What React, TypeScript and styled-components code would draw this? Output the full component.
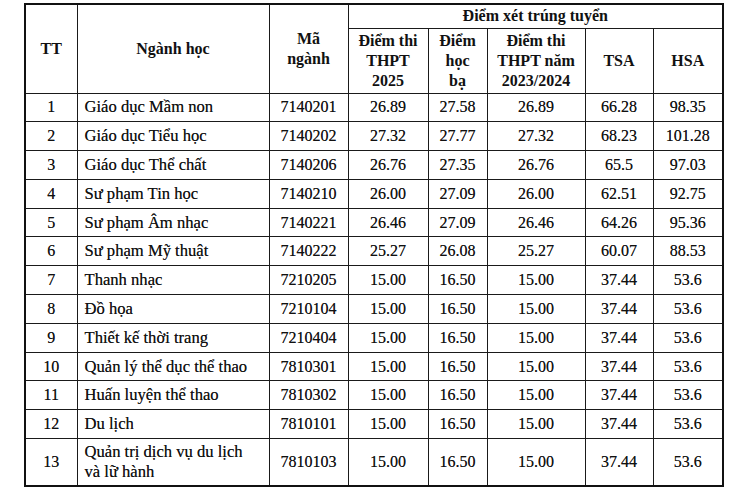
import React from 'react'
import styled, { createGlobalStyle } from 'styled-components'

const GlobalStyle = createGlobalStyle`
  html, body {
    margin: 0;
    padding: 0;
    background: #ffffff;
  }
  body {
    font-family: "Liberation Serif", "DejaVu Serif", serif;
    color: #111;
  }
`;

const Page = styled.div`
  width: 751px;
  height: 497px;
  padding: 3px 0 0 24px;
  box-sizing: border-box;
  overflow: hidden;
`;

const Table = styled.table`
  border-collapse: collapse;
  table-layout: fixed;
  width: 698px;
  border: 2px solid #111;
  font-family: "Liberation Serif", "DejaVu Serif", serif;
  font-size: 16px;
  color: #111;
`;

const HeadCell = styled.th`
  border: 1px solid #1a1a1a;
  font-family: "Liberation Serif", "DejaVu Serif", serif;
  font-weight: bold;
  font-size: 16px;
  line-height: 20px;
  padding: 0;
  text-align: center;
  vertical-align: middle;
`;

const Cell = styled.td<{ $left?: boolean }>`
  border: 1px solid #1a1a1a;
  font-family: "Liberation Serif", "DejaVu Serif", serif;
  padding: 0 0 0 ${p => (p.$left ? '7px' : '0')};
  line-height: 20px;
  text-align: ${p => (p.$left ? 'left' : 'center')};
  vertical-align: middle;
  font-size: ${p => (p.$left ? '16.6px' : '16px')};
  text-shadow: 0 0 0.4px rgba(0, 0, 0, 0.6);
`;

const Row = styled.tr<{ $h: number }>`
  height: ${p => p.$h}px;
`;

type Item = [string, string, string, string, string, string, string]

const rows: Item[] = [
  ['Giáo dục Mầm non', '7140201', '26.89', '27.58', '26.89', '66.28', '98.35'],
  ['Giáo dục Tiểu học', '7140202', '27.32', '27.77', '27.32', '68.23', '101.28'],
  ['Giáo dục Thể chất', '7140206', '26.76', '27.35', '26.76', '65.5', '97.03'],
  ['Sư phạm Tin học', '7140210', '26.00', '27.09', '26.00', '62.51', '92.75'],
  ['Sư phạm Âm nhạc', '7140221', '26.46', '27.09', '26.46', '64.26', '95.36'],
  ['Sư phạm Mỹ thuật', '7140222', '25.27', '26.08', '25.27', '60.07', '88.53'],
  ['Thanh nhạc', '7210205', '15.00', '16.50', '15.00', '37.44', '53.6'],
  ['Đồ họa', '7210104', '15.00', '16.50', '15.00', '37.44', '53.6'],
  ['Thiết kế thời trang', '7210404', '15.00', '16.50', '15.00', '37.44', '53.6'],
  ['Quản lý thể dục thể thao', '7810301', '15.00', '16.50', '15.00', '37.44', '53.6'],
  ['Huấn luyện thể thao', '7810302', '15.00', '16.50', '15.00', '37.44', '53.6'],
  ['Du lịch', '7810101', '15.00', '16.50', '15.00', '37.44', '53.6'],
  ['Quản trị dịch vụ du lịch và lữ hành', '7810103', '15.00', '16.50', '15.00', '37.44', '53.6'],
]

const widths = [52, 192, 79, 80, 59, 98, 68, 70]

export default function App() {
  return (
    <>
      <GlobalStyle />
      <Page>
        <Table>
          <colgroup>
            {widths.map((w, i) => <col key={i} style={{ width: w }} />)}
          </colgroup>
          <thead>
            <Row $h={24}>
              <HeadCell rowSpan={2}>TT</HeadCell>
              <HeadCell rowSpan={2}>Ngành học</HeadCell>
              <HeadCell rowSpan={2}>Mã<br />ngành</HeadCell>
              <HeadCell colSpan={5}>Điểm xét trúng tuyển</HeadCell>
            </Row>
            <Row $h={65}>
              <HeadCell>Điểm thi<br />THPT<br />2025</HeadCell>
              <HeadCell>Điểm<br />học<br />bạ</HeadCell>
              <HeadCell>Điểm thi<br />THPT năm<br />2023/2024</HeadCell>
              <HeadCell>TSA</HeadCell>
              <HeadCell>HSA</HeadCell>
            </Row>
          </thead>
          <tbody>
            {rows.map((r, i) => (
              <Row key={i} $h={i === rows.length - 1 ? 47 : 28.8}>
                <Cell>{i + 1}</Cell>
                <Cell $left>{i === rows.length - 1 ? <>Quản trị dịch vụ du lịch<br />và lữ hành</> : r[0]}</Cell>
                {r.slice(1).map((v, j) => <Cell key={j}>{v}</Cell>)}
              </Row>
            ))}
          </tbody>
        </Table>
      </Page>
    </>
  )
}
